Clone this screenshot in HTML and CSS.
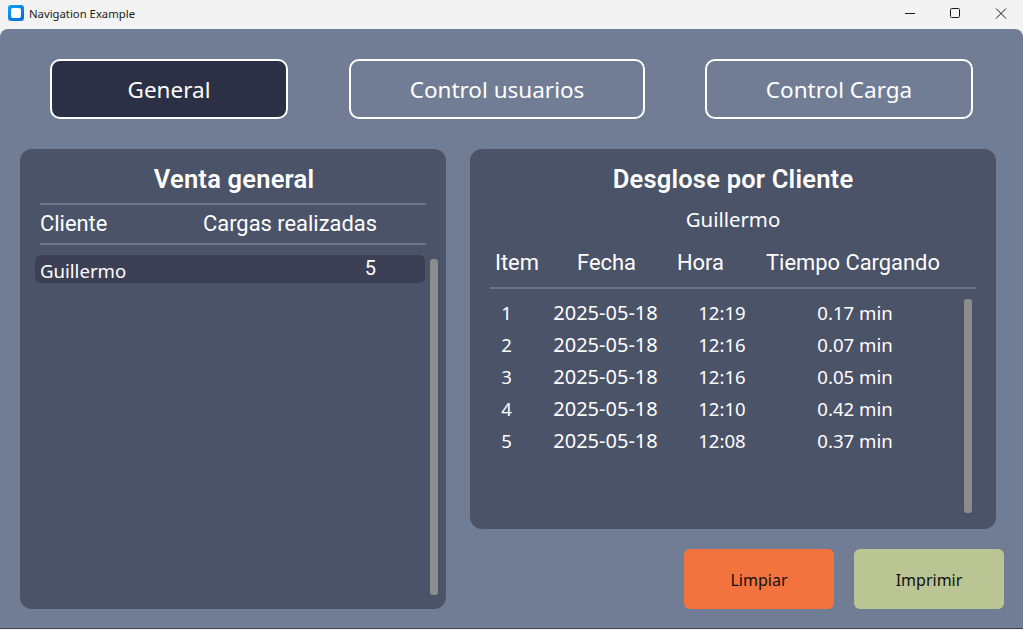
FILE: index.html
```html
<!DOCTYPE html>
<html lang="en">
<head>
    <meta charset="UTF-8">
    <title>Navigation Example</title>
    <link rel="stylesheet" href="styles.css">
</head>
<body>
    <div class="titlebar">
        <svg class="app-icon" width="16" height="16" viewBox="0 0 16 16">
            <defs>
                <linearGradient id="icon-fill" x1="0" y1="0" x2="1" y2="1">
                    <stop offset="0" stop-color="#0aa2f7"/>
                    <stop offset="1" stop-color="#0a6ccf"/>
                </linearGradient>
            </defs>
            <rect width="16" height="16" rx="3" fill="url(#icon-fill)"/>
            <rect x="3" y="3" width="10" height="10" rx="2" fill="#ffffff"/>
        </svg>
        <span class="title-text">Navigation Example</span>
        <div class="win-controls">
            <svg width="46" height="28" viewBox="0 0 46 28"><path d="M19 13.5h10" stroke="#1a1a1a" fill="none"/></svg>
            <svg width="46" height="28" viewBox="0 0 46 28"><rect x="18.5" y="8.5" width="9" height="9" rx="1" stroke="#1a1a1a" fill="none"/></svg>
            <svg width="46" height="28" viewBox="0 0 46 28"><path d="M18 8.5l10 10M28 8.5l-10 10" stroke="#1a1a1a" fill="none"/></svg>
        </div>
    </div>

    <div class="main">
        <div class="nav">
            <button class="nav-btn active btn-general">General</button>
            <button class="nav-btn btn-usuarios">Control usuarios</button>
            <button class="nav-btn btn-carga">Control Carga</button>
        </div>

        <div class="content">
            <div class="panel panel-left">
                <h2>Venta general</h2>
                <div class="left-head">
                    <span>Cliente</span>
                    <span>Cargas realizadas</span>
                </div>
                <div class="left-body">
                    <div class="left-list">
                        <div class="client-row">
                            <span>Guillermo</span>
                            <span class="client-count">5</span>
                        </div>
                    </div>
                    <div class="scrollbar"></div>
                </div>
            </div>

            <div class="right-col">
                <div class="panel panel-right">
                    <h2>Desglose por Cliente</h2>
                    <div class="client-name">Guillermo</div>
                    <div class="detail-head">
                        <span>Item</span>
                        <span>Fecha</span>
                        <span>Hora</span>
                        <span>Tiempo Cargando</span>
                    </div>
                    <div class="detail-body">
                        <div class="detail-list">
                            <div class="detail-row"><span>1</span><span>2025-05-18</span><span>12:19</span><span>0.17 min</span></div>
                            <div class="detail-row"><span>2</span><span>2025-05-18</span><span>12:16</span><span>0.07 min</span></div>
                            <div class="detail-row"><span>3</span><span>2025-05-18</span><span>12:16</span><span>0.05 min</span></div>
                            <div class="detail-row"><span>4</span><span>2025-05-18</span><span>12:10</span><span>0.42 min</span></div>
                            <div class="detail-row"><span>5</span><span>2025-05-18</span><span>12:08</span><span>0.37 min</span></div>
                        </div>
                        <div class="scrollbar"></div>
                    </div>
                </div>
                <div class="actions">
                    <button class="action-btn btn-clear">Limpiar</button>
                    <button class="action-btn btn-print">Imprimir</button>
                </div>
            </div>
        </div>
    </div>
</body>
</html>
```

FILE: styles.css
```css
* {
    box-sizing: border-box;
}
html, body {
    margin: 0;
    height: 630px;
    overflow: hidden;
}
body {
    background: #f3f3f3;
    color: white;
    font-family: "Noto Sans", "Open Sans", sans-serif;
    display: flex;
    flex-direction: column;
}

/* window title bar */
.titlebar {
    height: 29px;
    flex: none;
    display: flex;
    align-items: center;
    padding: 0 0 3px 8px;
    color: #1a1a1a;
}
.app-icon {
    margin-right: 5px;
}
.title-text {
    font-size: 11.3px;
}
.win-controls {
    align-self: flex-start;
    margin-left: auto;
    margin-right: -1px;
    display: flex;
}

.main {
    height: 600px;
    flex: none;
    background: #707d94;
    border-radius: 8px 8px 0 0;
    border-bottom: 1px solid #3c4250;
    padding: 30px 19px 0 20px;
}

/* top navigation */
.nav {
    display: flex;
    padding-left: 30px;
    margin-bottom: 30px;
}
.nav-btn {
    height: 60px;
    padding: 1px 0 0;
    background: #707d94;
    border: 2px solid white;
    border-radius: 10px;
    color: white;
    font-family: "Noto Sans", sans-serif;
    font-size: 22.5px;
}
.nav-btn.active {
    background: #2b3044;
}
.btn-general {
    width: 238px;
    margin-right: 61px;
}
.btn-usuarios {
    width: 296px;
    margin-right: 60px;
}
.btn-carga {
    width: 268px;
}

.content {
    display: flex;
    gap: 24px;
}
.panel {
    background: #4b5368;
    border-radius: 12px;
}
.panel h2 {
    margin: 0;
    font-family: Roboto, sans-serif;
    font-size: 25.5px;
    font-weight: 600;
    letter-spacing: 0.2px;
    line-height: 28px;
    text-align: center;
}

/* left panel */
.panel-left {
    width: 426px;
    height: 460px;
    padding: 16px 0 0 20px;
}
.panel-left h2 {
    margin-right: 18px;
}
.left-head {
    width: 386px;
    height: 42px;
    margin-top: 10px;
    display: flex;
    align-items: center;
    padding-bottom: 2px;
    border-top: 2px solid #6b7489;
    border-bottom: 2px solid #6b7489;
    font-family: Roboto, sans-serif;
    font-size: 21.9px;
}
.left-head span:first-child {
    width: 163px;
}
.left-body {
    display: flex;
    margin: 10px 0 0 -5px;
    height: 340px;
}
.left-list {
    width: 390px;
}
.client-row {
    height: 28px;
    background: #3c4054;
    border-radius: 6px;
    padding: 3px 0 0 5px;
    display: flex;
    font-size: 18.6px;
    line-height: 26px;
}
.client-count {
    margin-left: auto;
    margin-right: 49px;
    margin-top: -3px;
    font-family: Roboto, sans-serif;
    font-size: 20px;
}
.scrollbar {
    width: 8px;
    background: #8c8c8c;
    border-radius: 3px;
}
.left-body .scrollbar {
    margin: 4px 0 0 5px;
    height: 336px;
}

/* right panel */
.right-col {
    width: 534px;
}
.panel-right {
    width: 526px;
    height: 380px;
    padding-top: 16px;
}
.client-name {
    margin-top: 12px;
    font-size: 20.4px;
    line-height: 28px;
    text-align: center;
}
.detail-head {
    display: grid;
    grid-template-columns: 82px 100px 89px auto;
    margin: 14px 20px 0;
    height: 42px;
    padding: 1px 0 0 5px;
    border-bottom: 2px solid #6b7489;
    font-family: Roboto, sans-serif;
    font-size: 21.9px;
    line-height: 30px;
}
.detail-body {
    display: flex;
    margin: 10px 0 0 20px;
    height: 214px;
}
.detail-list {
    width: 474px;
    margin-top: -1px;
}
.detail-row {
    display: grid;
    grid-template-columns: 33px 165px 68px 198px;
    height: 32px;
    font-size: 18.6px;
    line-height: 30px;
}
.detail-row span {
    text-align: center;
}
.detail-row span:nth-child(2) {
    font-size: 20px;
}
.detail-body .scrollbar {
    height: 214px;
}

/* bottom buttons */
.actions {
    display: flex;
    justify-content: flex-end;
    gap: 20px;
    margin-top: 20px;
}
.action-btn {
    width: 150px;
    height: 60px;
    padding: 1px 0 0;
    border: none;
    border-radius: 6px;
    color: #111;
    font-family: "Noto Sans", sans-serif;
    font-size: 16px;
}
.btn-clear {
    background: #f3733f;
}
.btn-print {
    background: #bbc493;
}
```
